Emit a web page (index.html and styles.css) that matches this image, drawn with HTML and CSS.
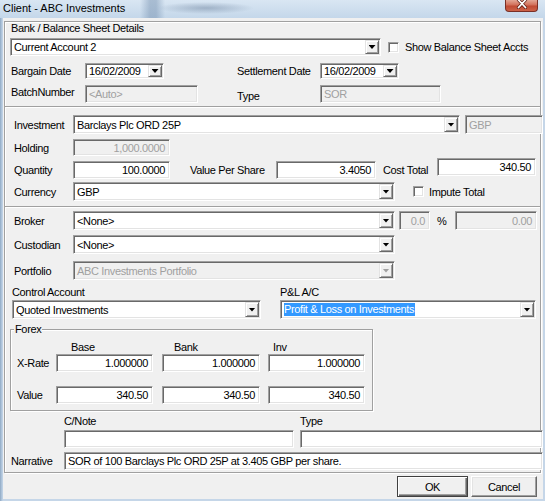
FILE: index.html
```html
<!DOCTYPE html>
<html>
<head>
<meta charset="utf-8">
<title>Client - ABC Investments</title>
<link rel="stylesheet" href="styles.css">
</head>
<body>
<div class="win">
  <div class="titlebar">
    <span class="title">Client - ABC Investments</span>
    <span class="close"><svg width="12" height="9" viewBox="0 0 12 9"><path d="M2.5 0 L9.5 7.5 M9.5 0 L2.5 7.5" stroke="#5a1a12" stroke-width="3.2" stroke-linecap="round"/><path d="M2.5 0 L9.5 7.5 M9.5 0 L2.5 7.5" stroke="#fff" stroke-width="1.8" stroke-linecap="round"/></svg></span>
  </div>
  <div class="client">
    <div class="panel p1">
      <div class="caption">Bank / Balance Sheet Details</div>
      <div class="row bank-row">
        <div class="combo bank-combo"><span class="txt">Current Account 2</span><span class="drop"></span></div>
        <span class="check bank-check"></span><span class="bank-check-lbl">Show Balance Sheet Accts</span>
      </div>
      <div class="row dates-row">
        <span class="lbl-a">Bargain Date</span>
        <div class="combo date"><span class="txt">16/02/2009</span><span class="drop"></span></div>
        <span class="lbl-settle">Settlement Date</span>
        <div class="combo date"><span class="txt">16/02/2009</span><span class="drop"></span></div>
      </div>
      <div class="row batch-row">
        <span class="lbl-a lbl-batch">BatchNumber</span>
        <div class="field dis batch-field">&lt;Auto&gt;</div>
        <span class="lbl-type">Type</span>
        <div class="field dis type-field">SOR</div>
      </div>
    </div>

    <div class="panel p2">
      <div class="row inv-row">
        <span class="lbl-b">Investment</span>
        <div class="combo inv-combo"><span class="txt">Barclays Plc ORD 25P</span><span class="drop"></span></div>
        <div class="field dis gbp">GBP</div>
      </div>
      <div class="row hold-row">
        <span class="lbl-b">Holding</span>
        <div class="field dis num qty-field">1,000.0000</div>
      </div>
      <div class="row qty-row">
        <span class="lbl-b">Quantity</span>
        <div class="field num qty-field">100.0000</div>
        <span class="lbl-vps">Value Per Share</span>
        <div class="field num vps-field">3.4050</div>
        <span class="lbl-cost">Cost Total</span>
        <div class="field num cost-field">340.50</div>
      </div>
      <div class="row cur-row">
        <span class="lbl-b">Currency</span>
        <div class="combo cur-combo"><span class="txt">GBP</span><span class="drop"></span></div>
        <span class="check impute-check"></span><span class="impute-lbl">Impute Total</span>
      </div>
    </div>

    <div class="panel p3">
      <div class="row broker-row">
        <span class="lbl-b">Broker</span>
        <div class="combo cur-combo"><span class="txt">&lt;None&gt;</span><span class="drop"></span></div>
        <div class="field dis num pct-field">0.0</div>
        <span class="pct-sign">%</span>
        <div class="field dis num comm-field">0.00</div>
      </div>
      <div class="row cust-row">
        <span class="lbl-b">Custodian</span>
        <div class="combo cur-combo"><span class="txt">&lt;None&gt;</span><span class="drop"></span></div>
      </div>
      <div class="row port-row">
        <span class="lbl-b">Portfolio</span>
        <div class="combo dis cur-combo"><span class="txt">ABC Investments Portfolio</span><span class="drop"></span></div>
      </div>
      <div class="row acct-lbl-row">
        <span class="lbl-ctrl">Control Account</span>
        <span>P&amp;L A/C</span>
      </div>
      <div class="row acct-row">
        <div class="combo ctrl-combo"><span class="txt">Quoted Investments</span><span class="drop"></span></div>
        <div class="combo pl-combo"><span class="txt"><span class="sel">Profit &amp; Loss on Investments</span></span><span class="drop"></span></div>
      </div>
      <fieldset class="forex">
        <legend>Forex</legend>
        <div class="row fx-head">
          <span class="fx-base">Base</span>
          <span class="fx-bank">Bank</span>
          <span>Inv</span>
        </div>
        <div class="row fx-row fx-rate">
          <span class="fx-lbl">X-Rate</span>
          <div class="field num fx-f1">1.000000</div>
          <div class="field num fx-f2">1.000000</div>
          <div class="field num fx-f3">1.000000</div>
        </div>
        <div class="row fx-row fx-value">
          <span class="fx-lbl">Value</span>
          <div class="field num fx-f1">340.50</div>
          <div class="field num fx-f2">340.50</div>
          <div class="field num fx-f3">340.50</div>
        </div>
      </fieldset>
      <div class="row cnote-lbl-row">
        <span class="lbl-cnote">C/Note</span>
        <span>Type</span>
      </div>
      <div class="row cnote-row">
        <div class="field cnote-field"></div>
        <div class="field ctype-field"></div>
      </div>
      <div class="row narr-row">
        <span class="lbl-narr">Narrative</span>
        <div class="field narr-field">SOR of 100 Barclays Plc ORD 25P at 3.405 GBP per share.</div>
      </div>
    </div>

    <div class="buttons">
      <span class="btn btn-ok">OK</span>
      <span class="btn btn-cancel">Cancel</span>
    </div>
  </div>
</div>
</body>
</html>
```

FILE: styles.css
```css
* { box-sizing: border-box; }
html, body { margin: 0; padding: 0; }
body {
  width: 545px;
  height: 501px;
  overflow: hidden;
  font-family: "Liberation Sans", Arial, sans-serif;
  font-size: 11px;
  letter-spacing: -0.35px;
  color: #000;
  background: #b4c8dd;
}
.win {
  width: 545px;
  height: 501px;
  display: flex;
  flex-direction: column;
  background: linear-gradient(to right, #8fa9c4 0, #b7cbe0 2px, #c5d6e8 3px, #c5d6e8 100%);
}

/* title bar */
.titlebar {
  height: 18px;
  flex: none;
  display: flex;
  align-items: flex-start;
  background:
    radial-gradient(ellipse 48px 6px at 206px 8px, rgba(100, 122, 150, 0.45), rgba(100, 122, 150, 0) 100%),
    linear-gradient(to right, rgba(120, 145, 175, 0) 140px, rgba(110, 138, 170, 0.45) 150px, rgba(110, 138, 170, 0.45) 156px, rgba(120, 145, 175, 0) 165px),
    linear-gradient(#d9e6f3, #c4d7ea);
}
.title {
  padding-left: 3px;
  line-height: 16px;
  font-size: 11px;
  letter-spacing: 0;
  color: #000;
}
.close {
  margin-left: auto;
  margin-right: 7px;
  width: 33px;
  height: 12px;
  border: 1px solid #7a2f25;
  border-top: none;
  border-radius: 0 0 4px 4px;
  background: linear-gradient(#e3a694, #d2705a 45%, #c04a33 55%, #cc6248);
  display: flex;
  justify-content: center;
  align-items: flex-start;
}
.close svg { display: block; }

/* client area */
.client {
  flex: 1;
  margin: 0 2px 2px 3px;
  background: #f0f0f0;
  padding: 3px 2px 0 1px;
}
.panel {
  border: 1px solid #a0a0a0;
  box-shadow: inset 1px 1px #fff, 1px 1px 0 #fff;
}
.p1 { padding-bottom: 3px; }
.p2 { border-top: none; padding-top: 8px; padding-bottom: 5px; }
.p3 { border-top: none; padding-top: 4px; padding-bottom: 2px; }

.row {
  display: flex;
  align-items: center;
  white-space: nowrap;
}

/* controls */
.field {
  height: 100%;
  flex: none;
  background: #fff;
  border: 1px solid;
  border-color: #a0a0a0 #fff #fff #a0a0a0;
  box-shadow: inset 1px 1px #696969, inset -1px -1px #e3e3e3;
  padding: 0 3px;
  display: flex;
  align-items: center;
  overflow: hidden;
  white-space: nowrap;
}
.field.num { justify-content: flex-end; padding-right: 4px; }
.field.dis { background: #f0f0f0; color: #a0a0a0; }

.combo {
  height: 100%;
  flex: none;
  display: flex;
  align-items: stretch;
  background: #fff;
  border: 1px solid;
  border-color: #a0a0a0 #fff #fff #a0a0a0;
  box-shadow: inset 1px 1px #696969, inset -1px -1px #e3e3e3;
  padding: 1px;
  overflow: hidden;
}
.combo .txt {
  flex: 1;
  display: flex;
  align-items: center;
  padding-left: 2px;
  overflow: hidden;
  white-space: nowrap;
}
.combo.dis { background: #f0f0f0; color: #a0a0a0; }
.drop {
  width: 14px;
  flex: none;
  background: #f0f0f0;
  border: 1px solid;
  border-color: #e3e3e3 #696969 #696969 #e3e3e3;
  box-shadow: inset 1px 1px #fff, inset -1px -1px #a0a0a0;
  display: flex;
  align-items: center;
  justify-content: center;
}
.drop::after {
  content: "";
  width: 7px;
  height: 4px;
  background: #000;
  clip-path: polygon(0 0, 100% 0, 50% 100%);
}
.combo.dis .drop::after { background: #a0a0a0; }

.check {
  width: 11px;
  height: 11px;
  flex: none;
  background: #fff;
  border: 1px solid;
  border-color: #a0a0a0 #fff #fff #a0a0a0;
  box-shadow: inset 1px 1px #696969, inset -1px -1px #e3e3e3;
}
.sel {
  background: #3399ff;
  color: #fff;
  line-height: 13px;
  padding-right: 1px;
}

/* panel 1 */
.caption { height: 13px; line-height: 13px; padding-left: 6px; }
.bank-row { height: 18px; margin-top: 3px; }
.bank-combo { margin-left: 5px; width: 371px; }
.bank-check { margin-left: 7px; }
.bank-check-lbl { margin-left: 6px; }
.dates-row { height: 16px; margin-top: 7px; }
.lbl-a { margin-left: 6px; width: 74px; flex: none; }
.date { width: 79px; }
.lbl-settle { margin-left: 73px; width: 83px; flex: none; }
.batch-row { height: 18px; margin-top: 6px; }
.lbl-batch { align-self: flex-start; padding-top: 1px; }
.batch-field { width: 113px; }
.lbl-type { margin-left: 39px; width: 83px; flex: none; padding-top: 4px; }
.type-field { width: 121px; }

/* panel 2 */
.lbl-b { margin-left: 9px; width: 59px; flex: none; }
.inv-row { height: 19px; }
.inv-combo { width: 387px; }
.gbp { margin-left: 5px; width: 78px; }
.hold-row { height: 17px; margin-top: 5px; }
.qty-row { height: 18px; margin-top: 5px; }
.qty-field { width: 97px; }
.lbl-vps { margin-left: 20px; width: 86px; flex: none; }
.vps-field { width: 100px; }
.lbl-cost { margin-left: 7px; width: 54px; flex: none; }
.cost-field { width: 99px; height: 18px; align-self: flex-start; margin-top: -3px; }
.cur-row { height: 19px; margin-top: 3px; }
.cur-combo { width: 322px; }
.impute-check { margin-left: 18px; }
.impute-lbl { margin-left: 5px; }

/* panel 3 */
.broker-row { height: 19px; }
.pct-field { margin-left: 4px; width: 31px; }
.pct-sign { margin-left: 7px; width: 18px; flex: none; }
.comm-field { width: 82px; }
.cust-row { height: 19px; margin-top: 5px; }
.port-row { height: 19px; margin-top: 7px; }
.acct-lbl-row { height: 12px; margin-top: 6px; }
.lbl-ctrl { margin-left: 7px; width: 268px; flex: none; }
.acct-row { height: 19px; margin-top: 2px; }
.ctrl-combo { margin-left: 7px; width: 249px; }
.pl-combo { margin-left: 19px; width: 256px; }

.forex {
  margin: 5px 0 0 5px;
  padding: 0 0 6px 0;
  width: 363px;
  min-width: 0;
  border: 1px solid #a0a0a0;
  box-shadow: inset 1px 1px #fff, 1px 1px 0 #fff;
}
.forex legend {
  padding: 0 1px;
  margin-left: 3px;
  line-height: 11px;
  background: #f0f0f0;
}
.fx-head { height: 12px; margin-top: 6px; }
.fx-base { margin-left: 60px; width: 103px; flex: none; }
.fx-bank { width: 99px; flex: none; }
.fx-row { height: 18px; }
.fx-rate { margin-top: 1px; }
.fx-value { margin-top: 14px; }
.fx-lbl { margin-left: 6px; width: 39px; flex: none; }
.fx-f1 { width: 97px; }
.fx-f2 { margin-left: 9px; width: 98px; }
.fx-f3 { margin-left: 8px; width: 97px; }

.cnote-lbl-row { height: 12px; margin-top: 4px; }
.lbl-cnote { margin-left: 59px; width: 236px; flex: none; }
.cnote-row { height: 18px; margin-top: 3px; }
.cnote-field { margin-left: 59px; width: 230px; }
.ctype-field { margin-left: 6px; width: 243px; }
.narr-row { height: 18px; margin-top: 4px; }
.lbl-narr { margin-left: 6px; width: 53px; flex: none; }
.narr-field { width: 479px; }

/* buttons */
.buttons {
  display: flex;
  justify-content: flex-end;
  gap: 3px;
  margin-top: 3px;
  padding-right: 4px;
  height: 21px;
}
.btn {
  height: 21px;
  display: flex;
  align-items: center;
  justify-content: center;
  background: #f0f0f0;
  border: 1px solid;
  border-color: #fff #696969 #696969 #fff;
  box-shadow: inset -1px -1px #a0a0a0, inset 1px 1px #e3e3e3;
}
.btn-ok {
  width: 71px;
  border-color: #404040;
  box-shadow: inset 1px 1px #fff, inset -1px -1px #696969, inset -2px -2px #a0a0a0;
}
.btn-cancel { width: 66px; }
```
